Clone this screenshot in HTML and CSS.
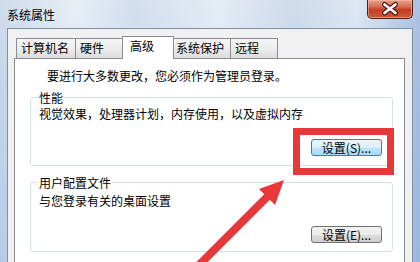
FILE: index.html
```html
<!DOCTYPE html>
<html lang="zh-CN">
<head>
	<meta charset="UTF-8">
	<meta name="viewport" content="width=device-width, initial-scale=1.0">
	<title>系统属性</title>
	<link rel="stylesheet" href="styles.css">
</head>
<body>
	<div class="window">
		<div class="titlebar">
			<span class="title">系统属性</span>
			<div class="close">
				<svg width="46" height="19" viewBox="0 0 46 19">
					<path d="M17.5 5.5 L28.5 14 M28.5 5.5 L17.5 14" stroke="#4a1a12" stroke-width="5" stroke-linecap="round"/>
					<path d="M17.5 5.5 L28.5 14 M28.5 5.5 L17.5 14" stroke="#fff" stroke-width="2.6" stroke-linecap="round"/>
				</svg>
			</div>
		</div>

		<div class="dialog">
			<div class="tabs">
				<div class="tab tab-wide">计算机名</div>
				<div class="tab">硬件</div>
				<div class="tab active">高级</div>
				<div class="tab tab-wide2">系统保护</div>
				<div class="tab tab-last">远程</div>
			</div>
			<div class="panel">
				<p class="intro">要进行大多数更改，您必须作为管理员登录。</p>

				<fieldset class="group group-perf">
					<legend>性能</legend>
					<p class="desc">视觉效果，处理器计划，内存使用，以及虚拟内存</p>
					<div class="actions"><button class="btn btn-default">设置(S)...</button></div>
				</fieldset>

				<fieldset class="group group-profile">
					<legend>用户配置文件</legend>
					<p class="desc">与您登录有关的桌面设置</p>
					<div class="actions"><button class="btn">设置(E)...</button></div>
				</fieldset>
			</div>
		</div>

		<!-- red annotation over the screenshot -->
		<div class="highlight"></div>
		<svg class="arrow" width="420" height="262" viewBox="0 0 420 262">
			<line x1="196" y1="268" x2="269" y2="195" stroke="#e8383a" stroke-width="8"/>
			<polygon points="284,180 259,189 275,205" fill="#e8383a"/>
		</svg>
	</div>
</body>
</html>
```

FILE: styles.css
```css
body {
	margin: 0;
	font-family: "Noto Sans CJK SC", "Liberation Sans", sans-serif;
	font-size: 12px;
	color: #000;
}
p { margin: 0; }

.window {
	position: relative;
	width: 420px;
	height: 262px;
	overflow: hidden;
	display: flex;
	flex-direction: column;
	background:
		linear-gradient(to right, rgba(255,255,255,0) 0%, rgba(255,255,255,0.5) 18%, rgba(255,255,255,0.1) 32%, rgba(255,255,255,0.45) 52%, rgba(255,255,255,0) 70%, rgba(255,255,255,0.3) 85%, rgba(90,130,200,0.3) 100%),
		linear-gradient(#cfdcec, #c2d4ea 40%, #b7cbe6);
}

.titlebar {
	height: 28px;
	flex-shrink: 0;
	display: flex;
	justify-content: space-between;
	align-items: flex-start;
	padding: 0 7px 0 7px;
}
.title {
	margin-top: 8px;
	line-height: 14px;
	font-size: 12px;
}
.close {
	width: 46px;
	height: 19px;
	box-sizing: border-box;
	border: 1px solid #4b2018;
	border-top: none;
	border-radius: 0 0 5px 5px;
	background: linear-gradient(#e7a08e 0%, #d8705a 35%, #c23d22 55%, #cf5a3a 100%);
	box-shadow: inset 0 0 0 1px rgba(255,200,180,0.5);
}
.close svg { display: block; margin: -1px 0 0 -1px; }

.dialog {
	flex: 1;
	display: flex;
	flex-direction: column;
	margin: 0 7px 0 7px;
	padding: 7px 7px 0 6px;
	background: #f0f0f0;
	border: 1px solid #7f8fa5;
	border-bottom: none;
}

.tabs {
	display: flex;
	align-items: flex-end;
	height: 22px;
	padding-left: 2px;
}
.tab {
	box-sizing: border-box;
	width: 48px;
	height: 20px;
	line-height: 18px;
	padding-left: 4px;
	border: 1px solid #898c95;
	border-bottom: none;
	border-left: none;
	background: linear-gradient(#f6f6f6, #ececec 50%, #dcdcdc);
	white-space: nowrap;
}
.tab-wide {
	width: 60px;
	border-left: 1px solid #898c95;
}
.tab-wide2 { width: 59px; }
.tab-last { width: 47px; }
.tab.active {
	position: relative;
	z-index: 1;
	width: 52px;
	height: 23px;
	line-height: 17px;
	margin: 0 -2px -1px -2px;
	padding-left: 7px;
	border-left: 1px solid #898c95;
	background: #fff;
}

.panel {
	flex: 1;
	background: #fff;
	border: 1px solid #898c95;
	border-bottom: none;
	padding: 0 11px 0 15px;
}

.intro {
	margin: 9px 0 0 17px;
	line-height: 16px;
}

.group {
	margin: 0;
	padding: 0 10px 0 8px;
	border: 1px solid #d5dfe5;
	border-radius: 3px;
}
.group legend {
	padding: 0 1px;
	margin-left: -1px;
	line-height: 15px;
}
.group-perf { margin-top: 6px; padding-bottom: 9px; }
.group-profile { margin-top: 9px; padding-bottom: 8px; }

.desc { line-height: 16px; }
.group-perf .desc { margin-top: 1px; }
.group-profile .desc { margin-top: 3px; }

.actions {
	display: flex;
	justify-content: flex-end;
	margin-top: 17px;
}
.btn {
	box-sizing: border-box;
	width: 71px;
	height: 17px;
	padding: 0;
	font-family: inherit;
	font-size: 12px;
	line-height: 15px;
	color: #000;
	border: 1px solid #707070;
	border-radius: 3px;
	background: linear-gradient(#f2f2f2 0%, #ebebeb 50%, #dddddd 51%, #cfcfcf 100%);
}
.btn-default {
	border-color: #3c7fb1;
	background: linear-gradient(#eaf6fd 0%, #d9f0fc 50%, #bee6fd 51%, #a7d9f5 100%);
}

.highlight {
	position: absolute;
	left: 293px;
	top: 128px;
	width: 101px;
	height: 47px;
	box-sizing: border-box;
	border: 7px solid #e8383a;
}
.arrow {
	position: absolute;
	left: 0;
	top: 0;
	pointer-events: none;
}
```
